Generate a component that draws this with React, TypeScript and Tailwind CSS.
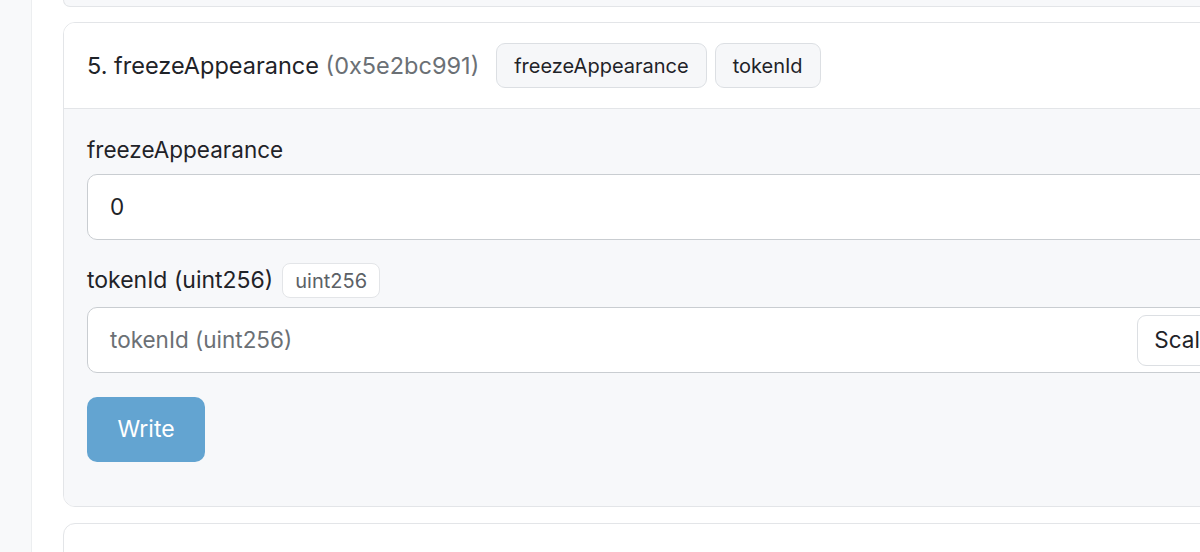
const font = { fontFamily: "Inter, 'Noto Sans', sans-serif" };

function Badge({ children }: { children: React.ReactNode }) {
  return (
    <span className="inline-flex h-[45px] items-center rounded-[9px] border border-[#dcdfe3] bg-[#f6f7f9] px-[17px] text-[20px] text-[#1f2328]">
      {children}
    </span>
  );
}

export default function App() {
  return (
    <div className="flex h-[552px] w-[1200px] overflow-hidden bg-white" style={font}>
      <aside className="w-[32px] shrink-0 border-r border-[#eceef0] bg-[#f8f9fa]" />
      <main className="flex w-[1230px] shrink-0 flex-col gap-[15px] pl-[31px]">
        {/* bottom of previous card */}
        <div className="h-[7px] shrink-0 rounded-b-[12px] border border-t-0 border-[#e3e5e8] bg-[#f7f8fa]" />

        <section className="shrink-0 overflow-hidden rounded-[12px] border border-[#e3e5e8]">
          <header className="flex items-center gap-[8px] border-b border-[#e3e5e8] bg-white py-[20px] pl-[23px]">
            <h3 className="mr-[9px] text-[23.5px] text-[#1f2328]">
              5. freezeAppearance <span className="text-[#6b7075]">(0x5e2bc991)</span>
            </h3>
            <Badge>freezeAppearance</Badge>
            <Badge>tokenId</Badge>
          </header>

          <div className="flex flex-col bg-[#f7f8fa] px-[23px] pt-[27px] pb-[44px]">
            <label className="text-[22.5px] leading-[28px] text-[#1f2328]">freezeAppearance</label>
            <div className="mt-[10px] flex h-[66px] items-center rounded-[10px] border-[1.5px] border-[#c9cdd1] bg-white px-[22px] text-[22.5px] text-[#1f2328]">
              0
            </div>

            <div className="mt-[23px] flex items-center gap-[9px]">
              <span className="text-[23px] text-[#1f2328]">tokenId (uint256)</span>
              <span className="inline-flex h-[35px] items-center rounded-[8px] border border-[#e3e5e8] bg-white px-[12px] text-[20px] text-[#5c6166]">
                uint256
              </span>
            </div>
            <div className="mt-[9px] flex h-[66px] items-center rounded-[10px] border-[1.5px] border-[#c9cdd1] bg-white pr-[7px] pl-[22px]">
              <span className="flex-1 text-[22.5px] text-[#6b7075]">tokenId (uint256)</span>
              <button className="h-[51px] rounded-[9px] border border-[#dcdfe3] bg-white px-[16px] text-[22.5px] text-[#1f2328]">
                Scale
              </button>
            </div>

            <button className="mt-[24px] h-[65px] w-[118px] rounded-[10px] bg-[#63a4d1] text-[23px] text-white">
              Write
            </button>
          </div>
        </section>

        <section className="mt-[1px] h-[40px] shrink-0 rounded-t-[12px] border border-[#e3e5e8] bg-white" />
      </main>
    </div>
  );
}
